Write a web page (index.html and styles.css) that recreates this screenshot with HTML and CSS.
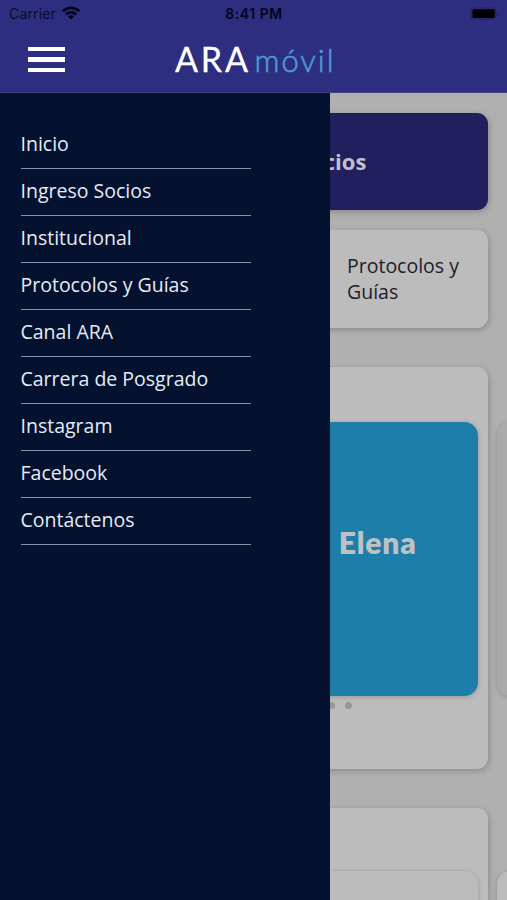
FILE: index.html
```html
<!DOCTYPE html>
<html lang="es">
<head>
<meta charset="utf-8">
<title>ARA móvil</title>
<link rel="stylesheet" href="styles.css">
</head>
<body>
<div class="app">
  <header class="header">
    <div class="status">
      <div class="carrier">
        <span>Carrier</span>
        <svg class="wifi" viewBox="0 0 18 14" width="18" height="14" aria-hidden="true">
          <g fill="none" stroke="#05051a" stroke-width="2.7">
            <path d="M.9 5.2C5.4.8 12.6.8 17.1 5.2"/>
            <path d="M3.9 8.5c2.9-2.8 7.3-2.8 10.2 0"/>
          </g>
          <path d="M6 10.5q3-2.5 6 0L9 13.6z" fill="#05051a"/>
        </svg>
      </div>
      <time class="clock">8:41 PM</time>
      <svg class="battery" viewBox="0 0 30 14" width="30" height="14" aria-hidden="true">
        <rect x=".9" y=".9" width="25.2" height="11.2" rx="3.2" fill="none" stroke="#22225f" stroke-width="1"/>
        <rect x="2.4" y="2.2" width="22.4" height="8.8" rx="1.6" fill="#000"/>
        <path d="M27.6 4.6v4q1.3-.6 1.3-2t-1.3-2z" fill="#25266b"/>
      </svg>
    </div>
    <div class="toolbar">
      <button class="burger" aria-label="Menú"><i></i><i></i><i></i></button>
      <svg class="logo" viewBox="0 0 166 40" width="166" height="40" role="img" aria-label="ARA móvil">
        <text class="logo-ara" x="4" y="32" textLength="73" lengthAdjust="spacing">ARA</text>
        <text class="logo-movil" x="83.5" y="32" textLength="79" lengthAdjust="spacing">móvil</text>
      </svg>
    </div>
  </header>
  <div class="stage">
    <main class="content">
      <a class="card login">Ingreso Socios</a>
      <div class="pair">
        <a class="card tile"></a>
        <a class="card tile">Protocolos y Guías</a>
      </div>
      <section class="card panel">
        <div class="slides">
          <div class="slide blue">Dr. Jorge Elena</div>
          <div class="slide grey"></div>
        </div>
        <div class="dots"><i></i><i></i><i></i><i></i><i></i><i></i><i></i><i></i><i></i></div>
      </section>
      <section class="card panel second">
        <div class="slides">
          <div class="slide"></div>
          <div class="slide"></div>
        </div>
      </section>
    </main>
    <nav class="drawer">
      <a>Inicio</a>
      <a>Ingreso Socios</a>
      <a>Institucional</a>
      <a>Protocolos y Guías</a>
      <a>Canal ARA</a>
      <a>Carrera de Posgrado</a>
      <a>Instagram</a>
      <a>Facebook</a>
      <a>Contáctenos</a>
    </nav>
  </div>
</div>
</body>
</html>
```
FILE: styles.css
```css
* { box-sizing: border-box; }
body { margin: 0; font-family: "Open Sans", sans-serif; }
.app {
  display: flex;
  flex-direction: column;
  height: 900px;
  overflow: hidden;
  background: #b0b0b0;
}
.header {
  flex: none;
  height: 93px;
  background: #2d2e80;
  border-bottom: 1px solid #3f4086;
}
.status {
  display: grid;
  grid-template-columns: 1fr auto 1fr;
  align-items: center;
  height: 27px;
  padding: 0 7px 0 9px;
  font-family: Inter, sans-serif;
  font-size: 14px;
  color: #0b0b2b;
}
.carrier { display: flex; align-items: center; gap: 6px; letter-spacing: .15px; }
.wifi { margin-top: -2px; }
.clock { margin-right: 1px; font-weight: 600; letter-spacing: .55px; color: #05051a; }
.battery { justify-self: end; }
.toolbar { display: flex; align-items: center; height: 66px; padding: 0 28px; gap: 106px; }
.burger {
  display: flex;
  flex-direction: column;
  gap: 6px;
  width: 37px;
  margin-top: -1px;
  padding: 0;
  border: 0;
  background: none;
}
.burger i { height: 4.3px; background: #fff; }
.logo { margin-top: -1px; overflow: visible; }
.logo text { font-family: Lato, sans-serif; }
.logo-ara { font-size: 34px; fill: #fff; stroke: #fff; stroke-width: .3px; }
.logo-movil { font-size: 31px; font-weight: 300; fill: #4a9bd6; stroke: #4a9bd6; stroke-width: .6px; }
.stage { position: relative; flex: 1; min-height: 0; overflow: hidden; }
.content { padding: 20px 19px 0 20px; }
.card {
  border-radius: 11px;
  background: #bcbcbc;
  box-shadow: 1px 2px 6px rgba(0, 0, 0, .22);
}
.login {
  display: flex;
  align-items: center;
  justify-content: center;
  height: 97px;
  padding: 0 0 2px 69px;
  background: #211f5d;
  color: #c2c2cc;
  font-size: 22px;
  font-weight: 700;
}
.pair { display: grid; grid-template-columns: 1fr 1fr; gap: 20px; margin-top: 20px; }
.tile {
  display: flex;
  align-items: center;
  height: 98px;
  padding: 0 20px 0 103px;
  font-size: 19.5px;
  line-height: 26px;
  color: #1b1c2e;
}
.pair .tile:last-child { margin-left: -20px; }
.panel { height: 402px; margin-top: 39px; padding: 55px 10px 0; }
.slides { display: flex; gap: 19px; }
.slide {
  flex: none;
  width: 447.5px;
  height: 274px;
  border-radius: 14px;
  background: #bcbcbc;
  box-shadow: 0 1px 5px rgba(0, 0, 0, .2);
}
.blue {
  display: flex;
  align-items: center;
  justify-content: flex-end;
  padding: 0 61px 34px 0;
  background: #1d7eaa;
  color: #bfc1c4;
  font-family: Lato, sans-serif;
  font-size: 30px;
  font-weight: 800;
  letter-spacing: .8px;
  word-spacing: 1px;
}
.grey { background: #aaa; }
.dots { display: flex; justify-content: flex-end; gap: 10px; margin: 6px 126.5px 0 0; }
.dots i { width: 7px; height: 7px; border-radius: 50%; background: #969696; }
.second { margin-top: 39px; padding-top: 63px; }
.drawer {
  position: absolute;
  inset: 0 auto 0 0;
  width: 330px;
  padding: 29px 79px 0 20.5px;
  background: #04122f;
}
.drawer a {
  display: block;
  height: 47.05px;
  padding-top: 8px;
  border-bottom: 1.5px solid #8b93a8;
  font-size: 19.5px;
  line-height: 27px;
  color: #e6ebf5;
}
```
